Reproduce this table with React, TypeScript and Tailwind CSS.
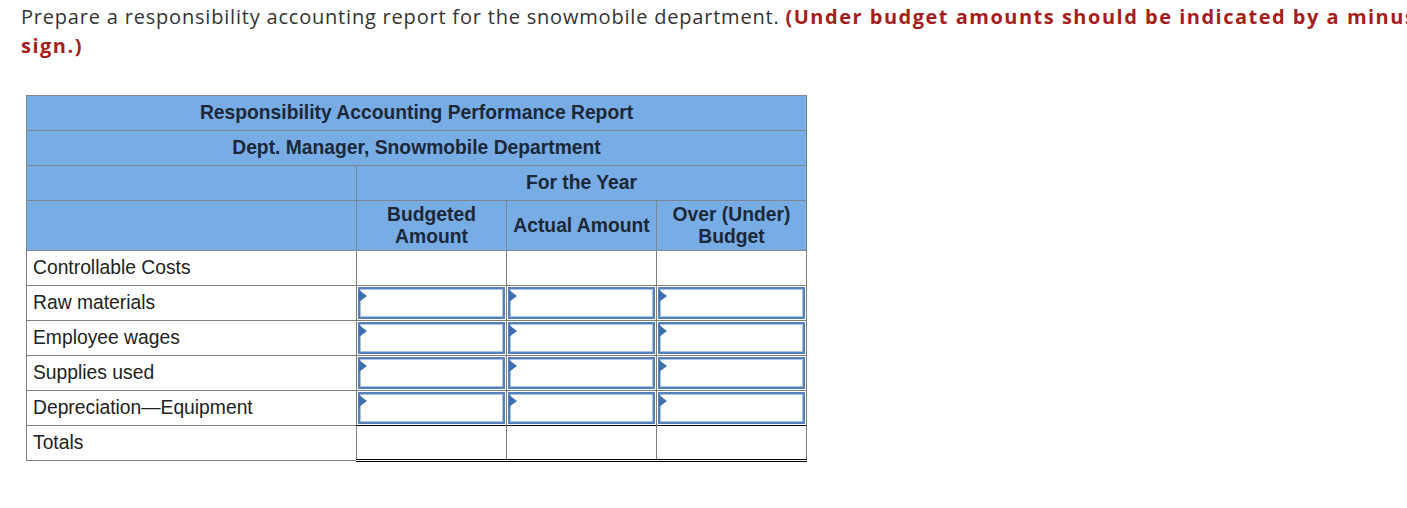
import React from "react";

const Tri = () => (
  <svg
    className="absolute left-[-1px] top-[1px]"
    width="8"
    height="12"
    viewBox="0 0 8 12"
  >
    <polygon points="0,0 8,6 0,12" fill="#3d6fb0" />
  </svg>
);

const InputCell = () => (
  <td className="border border-[#7f7f7f] p-0 h-[35px]">
    <div className="h-[34px] p-[1px]">
      <div className="relative h-full w-full border-2 border-[#5580b9] shadow-[inset_0_0_0_1px_#a9c3e6] bg-white">
        <Tri />
      </div>
    </div>
  </td>
);

const rows = ["Raw materials", "Employee wages", "Supplies used", "Depreciation\u2014Equipment"];

export default function App() {
  const hd = "bg-[#77ace4] border border-[#7b8794] text-[#1c2838] font-bold text-center";
  const lbl = "border border-[#7f7f7f] h-[35px] px-[6px] text-left font-normal text-[#222]";
  return (
    <div className="w-[1407px] h-[508px] overflow-hidden bg-white">
      <div
        className="w-[1500px] pl-[21px] pt-[2px] text-[20px] leading-[29px] tracking-[0.8px] text-[#333] whitespace-nowrap"
        style={{ fontFamily: '"Open Sans", sans-serif' }}
      >
        Prepare a responsibility accounting report for the snowmobile department.{" "}
        <span className="font-bold text-[#a51d1d] tracking-[1.5px]">
          (Under budget amounts should be indicated by a minus
          <br />
          sign.)
        </span>
      </div>
      <div className="pl-[26px] pt-[35px]" style={{ fontFamily: '"Liberation Sans", Arial, sans-serif' }}>
        <table className="border-collapse text-[19.3px] leading-[22px]">
          <colgroup>
            <col className="w-[330px]" />
            <col className="w-[150px]" />
            <col className="w-[150px]" />
            <col className="w-[150px]" />
          </colgroup>
          <tbody>
            <tr>
              <td colSpan={4} className={`${hd} h-[35px]`}>Responsibility Accounting Performance Report</td>
            </tr>
            <tr>
              <td colSpan={4} className={`${hd} h-[35px]`}>Dept. Manager, Snowmobile Department</td>
            </tr>
            <tr>
              <td className={`${hd} h-[35px]`}></td>
              <td colSpan={3} className={`${hd} h-[35px]`}>For the Year</td>
            </tr>
            <tr>
              <td className={`${hd} h-[50px]`}></td>
              <td className={`${hd} h-[50px]`}>Budgeted<br />Amount</td>
              <td className={`${hd} h-[50px]`}>Actual Amount</td>
              <td className={`${hd} h-[50px]`}>Over (Under)<br />Budget</td>
            </tr>
            <tr>
              <td className={lbl}>Controllable Costs</td>
              <td className="border border-[#7f7f7f] h-[35px]"></td>
              <td className="border border-[#7f7f7f] h-[35px]"></td>
              <td className="border border-[#7f7f7f] h-[35px]"></td>
            </tr>
            {rows.map((r) => (
              <tr key={r}>
                <td className={lbl}>{r}</td>
                <InputCell />
                <InputCell />
                <InputCell />
              </tr>
            ))}
            <tr>
              <td className={lbl}>Totals</td>
              <td className="border border-[#7f7f7f] border-t-black border-b-[3px] border-b-black border-double h-[35px]"></td>
              <td className="border border-[#7f7f7f] border-t-black border-b-[3px] border-b-black border-double h-[35px]"></td>
              <td className="border border-[#7f7f7f] border-t-black border-b-[3px] border-b-black border-double h-[35px]"></td>
            </tr>
          </tbody>
        </table>
      </div>
    </div>
  );
}
